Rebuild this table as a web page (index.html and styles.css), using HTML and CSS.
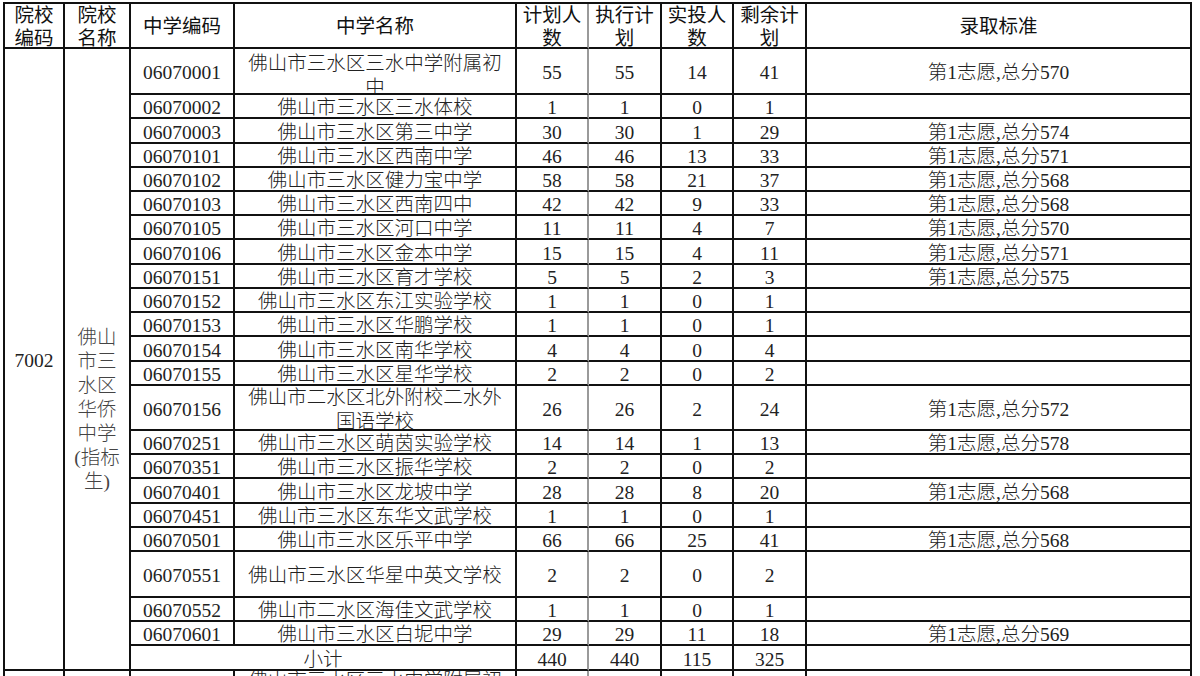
FILE: index.html
```html
<!DOCTYPE html>
<html lang="zh-CN">
<head>
<meta charset="utf-8">
<title>录取标准</title>
<link rel="stylesheet" href="styles.css">
</head>
<body>
<div class="sheet">
  <div class="c h">院校<br>编码</div>
  <div class="c h">院校<br>名称</div>
  <div class="c h">中学编码</div>
  <div class="c h">中学名称</div>
  <div class="c h g">计划人<br>数</div>
  <div class="c h">执行计<br>划</div>
  <div class="c h">实投人<br>数</div>
  <div class="c h">剩余计<br>划</div>
  <div class="c h">录取标准</div>

  <div class="c rows">7002</div>
  <div class="c rows school">佛山<br>市三<br>水区<br>华侨<br>中学<br>(指标<br>生)</div>

  <div class="c">06070001</div><div class="c first">佛山市三水区三水中学附属初<br>中</div><div class="c g">55</div><div class="c">55</div><div class="c">14</div><div class="c">41</div><div class="c">第1志愿,总分570</div>
  <div class="c">06070002</div><div class="c">佛山市三水区三水体校</div><div class="c g">1</div><div class="c">1</div><div class="c">0</div><div class="c">1</div><div class="c"></div>
  <div class="c">06070003</div><div class="c">佛山市三水区第三中学</div><div class="c g">30</div><div class="c">30</div><div class="c">1</div><div class="c">29</div><div class="c">第1志愿,总分574</div>
  <div class="c">06070101</div><div class="c">佛山市三水区西南中学</div><div class="c g">46</div><div class="c">46</div><div class="c">13</div><div class="c">33</div><div class="c">第1志愿,总分571</div>
  <div class="c">06070102</div><div class="c">佛山市三水区健力宝中学</div><div class="c g">58</div><div class="c">58</div><div class="c">21</div><div class="c">37</div><div class="c">第1志愿,总分568</div>
  <div class="c">06070103</div><div class="c">佛山市三水区西南四中</div><div class="c g">42</div><div class="c">42</div><div class="c">9</div><div class="c">33</div><div class="c">第1志愿,总分568</div>
  <div class="c">06070105</div><div class="c">佛山市三水区河口中学</div><div class="c g">11</div><div class="c">11</div><div class="c">4</div><div class="c">7</div><div class="c">第1志愿,总分570</div>
  <div class="c">06070106</div><div class="c">佛山市三水区金本中学</div><div class="c g">15</div><div class="c">15</div><div class="c">4</div><div class="c">11</div><div class="c">第1志愿,总分571</div>
  <div class="c">06070151</div><div class="c">佛山市三水区育才学校</div><div class="c g">5</div><div class="c">5</div><div class="c">2</div><div class="c">3</div><div class="c">第1志愿,总分575</div>
  <div class="c">06070152</div><div class="c">佛山市三水区东江实验学校</div><div class="c g">1</div><div class="c">1</div><div class="c">0</div><div class="c">1</div><div class="c"></div>
  <div class="c">06070153</div><div class="c">佛山市三水区华鹏学校</div><div class="c g">1</div><div class="c">1</div><div class="c">0</div><div class="c">1</div><div class="c"></div>
  <div class="c">06070154</div><div class="c">佛山市三水区南华学校</div><div class="c g">4</div><div class="c">4</div><div class="c">0</div><div class="c">4</div><div class="c"></div>
  <div class="c">06070155</div><div class="c">佛山市三水区星华学校</div><div class="c g">2</div><div class="c">2</div><div class="c">0</div><div class="c">2</div><div class="c"></div>
  <div class="c">06070156</div><div class="c">佛山市二水区北外附校二水外<br>国语学校</div><div class="c g">26</div><div class="c">26</div><div class="c">2</div><div class="c">24</div><div class="c">第1志愿,总分572</div>
  <div class="c">06070251</div><div class="c">佛山市三水区萌茵实验学校</div><div class="c g">14</div><div class="c">14</div><div class="c">1</div><div class="c">13</div><div class="c">第1志愿,总分578</div>
  <div class="c">06070351</div><div class="c">佛山市三水区振华学校</div><div class="c g">2</div><div class="c">2</div><div class="c">0</div><div class="c">2</div><div class="c"></div>
  <div class="c">06070401</div><div class="c">佛山市三水区龙坡中学</div><div class="c g">28</div><div class="c">28</div><div class="c">8</div><div class="c">20</div><div class="c">第1志愿,总分568</div>
  <div class="c">06070451</div><div class="c">佛山市三水区东华文武学校</div><div class="c g">1</div><div class="c">1</div><div class="c">0</div><div class="c">1</div><div class="c"></div>
  <div class="c">06070501</div><div class="c">佛山市三水区乐平中学</div><div class="c g">66</div><div class="c">66</div><div class="c">25</div><div class="c">41</div><div class="c">第1志愿,总分568</div>
  <div class="c">06070551</div><div class="c">佛山市三水区华星中英文学校</div><div class="c g">2</div><div class="c">2</div><div class="c">0</div><div class="c">2</div><div class="c"></div>
  <div class="c">06070552</div><div class="c">佛山市二水区海佳文武学校</div><div class="c g">1</div><div class="c">1</div><div class="c">0</div><div class="c">1</div><div class="c"></div>
  <div class="c">06070601</div><div class="c">佛山市三水区白坭中学</div><div class="c g">29</div><div class="c">29</div><div class="c">11</div><div class="c">18</div><div class="c">第1志愿,总分569</div>
  <div class="c span2">小计</div><div class="c g">440</div><div class="c">440</div><div class="c">115</div><div class="c">325</div><div class="c"></div>

  <div class="c"></div><div class="c"></div><div class="c"></div><div class="c last">佛山市三水区三水中学附属初<br>中</div><div class="c g"></div><div class="c"></div><div class="c"></div><div class="c"></div><div class="c"></div>
</div>
</body>
</html>
```

FILE: styles.css
```css
html, body {
  margin: 0;
  padding: 0;
  background: #ffffff;
}

body {
  height: 676px;
  overflow: hidden;
  font-family: "Liberation Serif", "Noto Sans CJK SC", serif;
  font-size: 19.5px;
  color: #222222;
}

.sheet {
  display: grid;
  width: max-content;
  margin: 2px 0 0 3px;
  grid-template-columns: 60px 66px 104px 282px 72px 73px 72px 73px 385px;
  grid-template-rows:
    45px 46px 24px 25px 24px 24px 24px 24px 25px 24px 24px 24px 25px 24px
    45px 24px 24px 25px 24px 24px 46px 24px 24px 25px 46px;
  border-top: 2px solid #111111;
  border-left: 2px solid #111111;
}

.c {
  box-sizing: border-box;
  display: flex;
  align-items: center;
  justify-content: center;
  text-align: center;
  overflow: hidden;
  padding-top: 4px;
  line-height: 24px;
  font-weight: 300;
  white-space: nowrap;
  border-right: 2px solid #111111;
  border-bottom: 2px solid #111111;
}

.h {
  padding-top: 2px;
  font-family: "Liberation Sans", "Noto Sans CJK SC", sans-serif;
  font-weight: 400;
  line-height: 23px;
  color: #111111;
}

.g {
  border-right-color: #9a9a9a;
}

.rows {
  grid-row: span 23;
}

.school {
  align-items: flex-start;
  padding-top: 277px;
  color: #444444;
}

.first {
  padding-top: 10px;
}

.last {
  padding-top: 0;
}

.span2 {
  grid-column: span 2;
}
```
